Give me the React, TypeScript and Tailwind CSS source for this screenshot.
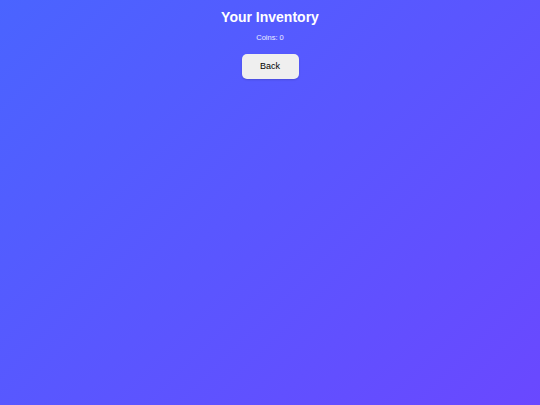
import React from "react";

export default function App() {
  return (
    <div
      className="w-[540px] h-[405px] flex flex-col items-center bg-[linear-gradient(135deg,#4a64ff_0%,#6a48ff_100%)]"
      style={{ fontFamily: '"Liberation Sans", Arial, sans-serif' }}
    >
      <h1 className="mt-[9px] text-[14px] leading-[16px] font-bold text-white">Your Inventory</h1>
      <p className="mt-[9px] text-[7.5px] leading-[8px] text-white/90">Coins: 0</p>
      <button className="mt-[12px] w-[57px] h-[25px] rounded-[5px] bg-[#efefef] text-[9px] text-[#000] shadow-[0_1px_2px_rgba(0,0,0,0.15)]">
        Back
      </button>
    </div>
  );
}
